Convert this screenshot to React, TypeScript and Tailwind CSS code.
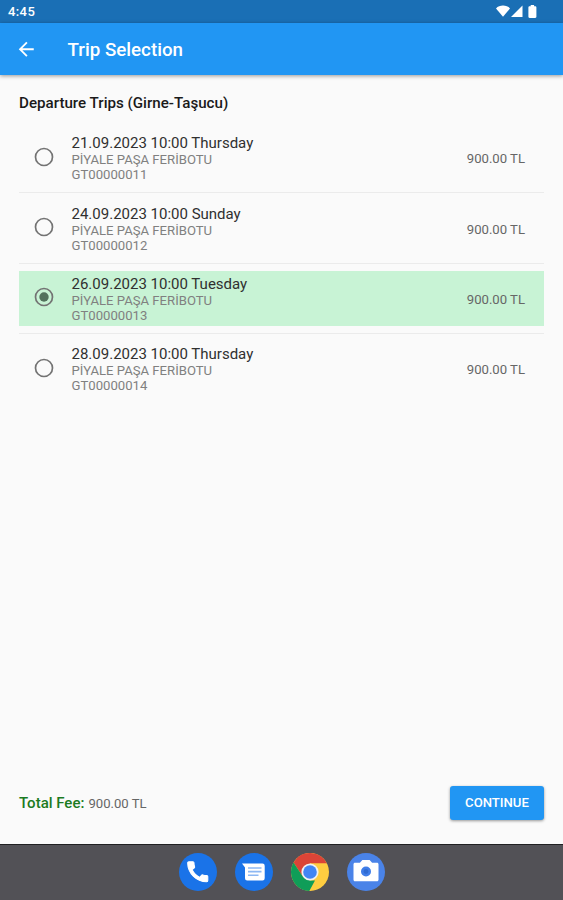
import { useState } from "react";

type Trip = {
  code: string;
  date: string;
  vessel: string;
  price: string;
};

const trips: Trip[] = [
  {
    code: "GT00000011",
    date: "21.09.2023 10:00 Thursday",
    vessel: "PİYALE PAŞA FERİBOTU",
    price: "900.00 TL",
  },
  {
    code: "GT00000012",
    date: "24.09.2023 10:00 Sunday",
    vessel: "PİYALE PAŞA FERİBOTU",
    price: "900.00 TL",
  },
  {
    code: "GT00000013",
    date: "26.09.2023 10:00 Tuesday",
    vessel: "PİYALE PAŞA FERİBOTU",
    price: "900.00 TL",
  },
  {
    code: "GT00000014",
    date: "28.09.2023 10:00 Thursday",
    vessel: "PİYALE PAŞA FERİBOTU",
    price: "900.00 TL",
  },
];

const StatusBar = () => {
  return (
    <div className="flex h-[22.7px] shrink-0 items-center justify-between bg-[#1a6fb5] pl-2 pr-[26px] text-white">
      <span className="pt-px text-[13px] font-medium tracking-[0.4px]">
        4:45
      </span>
      <div className="flex items-center">
        <svg width="14" height="12" viewBox="0 0 14 12" fill="currentColor">
          <path d="M7 11.8 0 3.4C1.8 1.6 4.2.6 7 .6s5.200 1 7 2.800z" />
        </svg>
        <svg
          className="ml-[1.500px]"
          width="12"
          height="12"
          viewBox="0 0 12 12"
          fill="currentColor"
        >
          <path d="M0 12 11.500.5V12z" />
        </svg>
        <svg
          className="ml-[5px]"
          width="9"
          height="13"
          viewBox="0 0 9 13"
          fill="currentColor"
        >
          <path d="M2.700 1.300V0h3.400v1.300h1.100c.7 0 1.200.5 1.200 1.200v9.300c0 .7-.5 1.200-1.200 1.200H1.600C.9 13 .4 12.500.4 11.800V2.500c0-.7.5-1.200 1.200-1.200z" />
        </svg>
      </div>
    </div>
  );
};

const Header = () => {
  return (
    <div className="flex h-[52.5px] shrink-0 items-center bg-[#2196f3] pl-[15px] text-white shadow-[0_1px_4px_rgba(0,0,0,0.4)]">
      <svg width="22.5" height="22.5" viewBox="0 0 24 24" fill="currentColor">
        <path d="M20 11H7.830l5.590-5.590L12 4l-8 8 8 8 1.410-1.410L7.830 13H20v-2z" />
      </svg>
      <h1 className="ml-[30px] pt-[2px] text-[18.76px] font-medium">
        Trip Selection
      </h1>
    </div>
  );
};

const Radio = ({ checked }: { checked: boolean }) => {
  return (
    <svg
      className="mb-[2px] shrink-0"
      width="20"
      height="20"
      viewBox="0 0 20 20"
      fill="none"
    >
      <circle cx="10" cy="10" r="8.500" stroke="#737373" strokeWidth="1.700" />
      {checked && <circle cx="10" cy="10" r="4.700" fill="#52725d" />}
    </svg>
  );
};

const TripRow = ({
  trip,
  checked,
  onSelect,
}: {
  trip: Trip;
  checked: boolean;
  onSelect: () => void;
}) => {
  return (
    <div
      onClick={onSelect}
      className={`flex h-[55.3px] items-center pl-[14.500px] pr-[19px] ${
        checked ? "bg-[#c8f3d5]" : ""
      }`}
    >
      <Radio checked={checked} />
      <div className="ml-[18px] flex-1 pt-px">
        <div className="text-[15px] leading-[18px] text-[#303030]">
          {trip.date}
        </div>
        <div className="text-[13.130px] leading-[15px] text-[#808080]">
          {trip.vessel}
        </div>
        <div className="text-[13.130px] leading-[15px] text-[#808080]">
          {trip.code}
        </div>
      </div>
      <div className="pt-[2.500px] text-[13.130px] text-[#666666]">
        {trip.price}
      </div>
    </div>
  );
};

const Dock = () => {
  return (
    <div className="flex h-14 shrink-0 items-center justify-center gap-[18px] border-t border-[#202022] bg-[#525156] pb-px">
      <svg width="38" height="38" viewBox="0 0 38 38">
        <circle cx="19" cy="19" r="19" fill="#1a73e8" />
        <path
          transform="translate(5.300 5.300) scale(1.120)"
          d="M20.010 15.380c-1.230 0-2.420-.2-3.530-.56-.35-.12-.74-.03-1.010.24l-1.570 1.970c-2.830-1.350-5.480-3.900-6.890-6.830l1.950-1.660c.27-.28.35-.67.24-1.020-.37-1.110-.56-2.300-.56-3.530 0-.54-.45-.99-.99-.99H4.190C3.650 3 3 3.240 3 3.990 3 13.280 10.730 21 20.010 21c.71 0 .99-.63.99-1.180v-3.450c0-.54-.45-.99-.99-.99z"
          fill="#fff"
          stroke="#fff"
          strokeWidth="0.900"
        />
      </svg>
      <svg width="38" height="38" viewBox="0 0 38 38">
        <circle cx="19" cy="19" r="19" fill="#1a73e8" />
        <path
          d="M7 10.500h20.500a2.200 2.200 0 0 1 2.200 2.200v12.600a2.200 2.200 0 0 1-2.200 2.200H12.200a2.200 2.200 0 0 1-2.200-2.200V14.500z"
          fill="#fff"
        />
        <path
          d="M13 15h13.500M13 18.600h13.500M13 22.200h10.500"
          stroke="#8db8f3"
          strokeWidth="1.600"
        />
      </svg>
      <svg width="38" height="38" viewBox="0 0 38 38">
        <circle cx="19" cy="19" r="19" fill="#ffcd40" />
        <path
          d="M19 19 11.600 23.300 2.550 9.500A19 19 0 0 1 35.800 10.300H19z"
          fill="#db4437"
        />
        <path
          d="M2.550 9.500 11.600 23.300 19 27.500h5L18.300 38A19 19 0 0 1 2.550 9.500z"
          fill="#0f9d58"
        />
        <circle cx="19" cy="19" r="8.600" fill="#f1f1f1" />
        <circle cx="19" cy="19" r="6.800" fill="#4285f4" />
      </svg>
      <svg width="38" height="38" viewBox="0 0 38 38">
        <circle cx="19" cy="19" r="19" fill="#4a83e8" />
        <path
          d="M8 9.800h4.900l2.500-2.800h7.200l2.500 2.800H30c.9 0 1.500.6 1.500 1.500v15.400c0 .9-.6 1.500-1.500 1.500H8c-.9 0-1.500-.6-1.500-1.500V11.300c0-.9.6-1.500 1.500-1.500z"
          fill="#fff"
        />
        <circle cx="19" cy="18.500" r="5" fill="#3f7de8" />
        <circle cx="19" cy="18.500" r="2.400" fill="#2f6bd2" />
      </svg>
    </div>
  );
};

export default function App() {
  const [selected, setSelected] = useState("GT00000013");

  return (
    <div className="flex h-[900px] w-full flex-col overflow-hidden bg-[#fafafa] font-['Roboto',sans-serif]">
      <StatusBar />
      <Header />
      <div className="flex flex-1 flex-col px-[19px]">
        <h2 className="mt-[18px] text-[15.150px] font-medium leading-5 text-[#1a1a1a]">
          Departure Trips (Girne-Taşucu)
        </h2>
        <div className="mt-[17px]">
          {trips.map((trip, i) => (
            <div key={trip.code}>
              {i > 0 && (
                <div className="flex h-[15px] items-center">
                  <div className="h-px w-full bg-[#ebebeb]" />
                </div>
              )}
              <TripRow
                trip={trip}
                checked={selected === trip.code}
                onSelect={() => setSelected(trip.code)}
              />
            </div>
          ))}
        </div>
        <div className="mb-6 mt-auto flex items-center justify-between">
          <div className="flex items-baseline gap-1">
            <span className="text-[15px] font-medium text-[#1b7a22]">
              Total Fee:
            </span>
            <span className="text-[13.130px] text-[#666666]">900.00 TL</span>
          </div>
          <button className="h-[34px] w-[94px] rounded-[3px] bg-[#2196f3] text-[13.130px] font-medium text-white shadow-[0_1px_3px_rgba(0,0,0,0.4)]">
            CONTINUE
          </button>
        </div>
      </div>
      <Dock />
    </div>
  );
}
